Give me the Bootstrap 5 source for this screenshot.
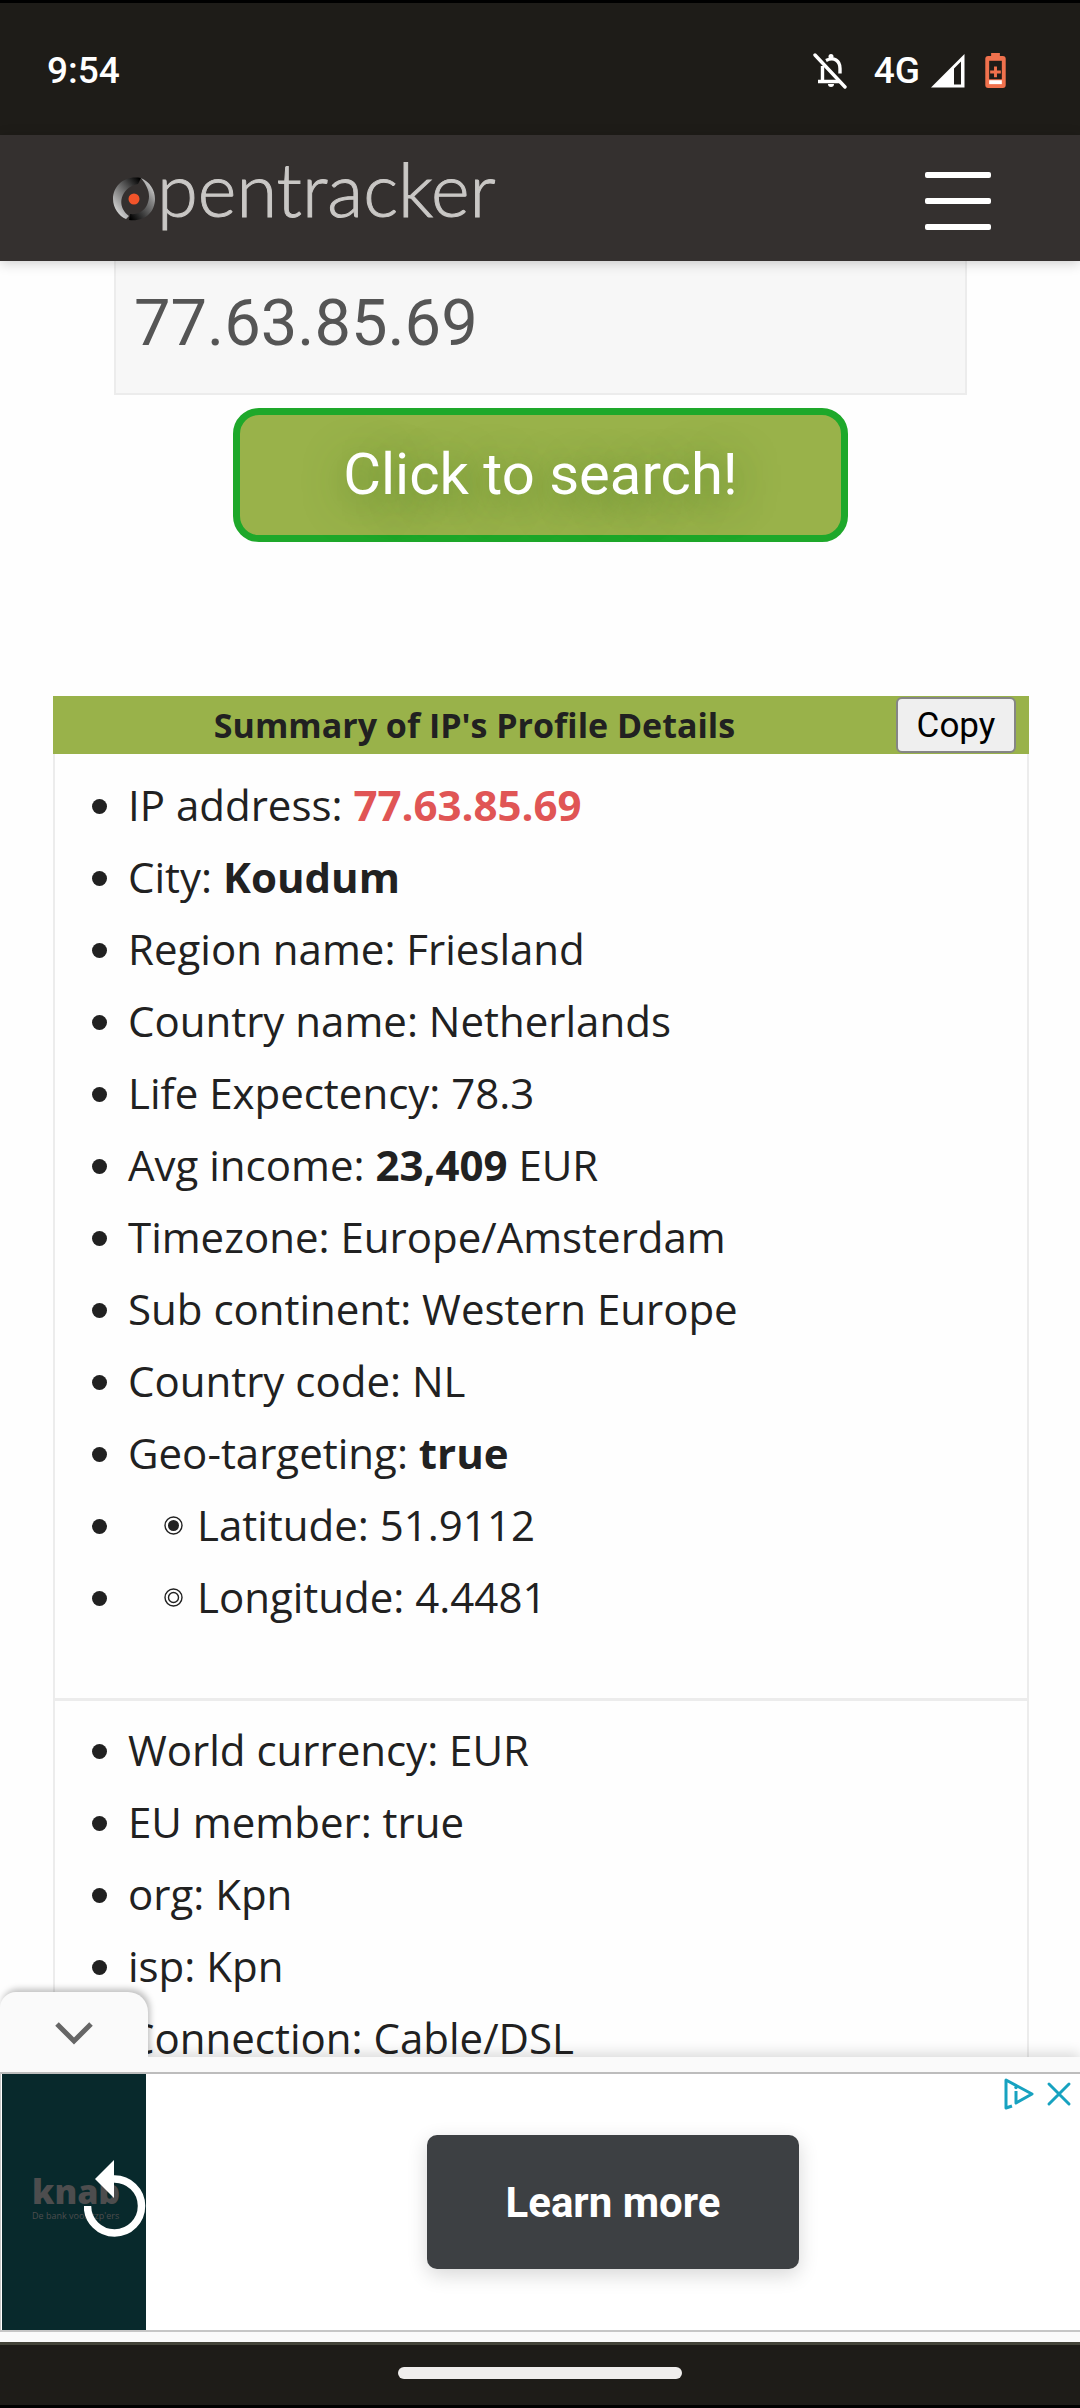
<!DOCTYPE html>
<html lang="en">
<head>
<meta charset="utf-8">
<meta name="viewport" content="width=device-width, initial-scale=1">
<title>Opentracker IP lookup</title>
<link rel="stylesheet" href="https://cdn.jsdelivr.net/npm/bootstrap@5.3.0/dist/css/bootstrap.min.css">
<script src="https://cdn.jsdelivr.net/npm/bootstrap@5.3.0/dist/js/bootstrap.bundle.min.js"></script>
<style>
  body { font-family: "Open Sans", "Noto Sans", sans-serif; color: #212121; background: #fefefe; }
  svg { display: block; flex: none; }

  .status-bar { height: 135px; padding: 0 74px 0 47px; background: #1e1c18; border-top: 3px solid #000; color: #fff;
    font-family: Roboto, sans-serif; font-weight: 500; font-size: 37px; }
  .status-inner { height: 132px; padding-top: 4px; }
  .sig-group { gap: 11px; margin-right: 20px; }
  .bell-icon { margin-right: 27px; }

  .site-nav { height: 126px; padding: 0 88px 0 113px; background: #34302f; box-shadow: 0 2px 12px rgba(0,0,0,.2); z-index: 2; }
  .brand-link { color: #c9c7c5; font-family: Lato, sans-serif; font-weight: 300; font-size: 74px; line-height: 96px; gap: 2px; padding-bottom: 18px;
    -webkit-text-stroke: 1px #c9c7c5; }
  .brand-eye { margin-top: 20px; }
  .menu-btn { width: 68px; height: 60px; gap: 20px; margin-top: 6px; }
  .menu-btn span { width: 66px; height: 6px; flex: none; border-radius: 2px; background: #fff; }

  .lookup-form { padding: 0 113px 0 114px; }
  .ip-field { height: 134px; padding: 0 18px 8px; border: 2px solid #ececec; border-top: 0; border-radius: 0; background: #f7f7f7 !important;
    color: #555 !important; font-family: Roboto, sans-serif; font-size: 65px; }
  .search-btn { width: 72%; height: 134px; margin: 13px auto 154px; padding: 0 0 2px; border: 7px solid #1ea82a !important; border-radius: 26px;
    background: #99b24a !important; color: #fff !important; font-family: Roboto, sans-serif; font-size: 58px; text-shadow: 0 8px 40px rgba(60,110,30,.8); }

  .profile-box { margin: 0 51px 0 53px; border: 2px solid #ececec; border-top: 0; }
  .profile-head { height: 58px; margin: 0 -2px; padding-right: 13px; background: #99b24a; }
  .profile-title { font-size: 34px; font-weight: 700; line-height: 56px; }
  .copy-btn { width: 120px; height: 56px; border: 2px solid #858585; border-radius: 6px; background: #efefef; color: #000;
    font-family: Roboto, sans-serif; font-size: 35px; line-height: 54px; }
  .facts { padding: 15px 0 65px 73px; font-size: 42px; line-height: 72px; }
  .facts + .facts { padding-top: 13px; border-top: 3px solid #ececec; }
  .facts li { position: relative; white-space: nowrap; }
  .facts li::before { content: ""; position: absolute; left: -36px; top: 30px; width: 15px; height: 15px; border-radius: 50%; background: #212121; }
  .facts .coord { padding-left: 36px; gap: 14px; }
  .ip-red { color: #e05555; }

  .ad-panel { z-index: 3; background: #fafafa; box-shadow: 0 -4px 12px rgba(0,0,0,.14); padding: 15px 0 10px; }
  .ad-toggle { position: absolute; left: 0; bottom: 100%; width: 148px; height: 65px; border: 0; border-radius: 16px 20px 0 0; background: #fafafa;
    box-shadow: 2px -3px 6px rgba(0,0,0,.25); clip-path: inset(-12px -14px 0 0); }
  .toggle-arrow { margin-top: 16px; }
  .ad-box { height: 260px; padding-left: 1px; border-top: 2px solid #bdbdbd; border-bottom: 2px solid #c6c6c6; border-left: 1px solid #c6c6c6; background: #fff; }
  .ad-thumb { width: 144px; padding: 0 0 10px 30px; background: #08292c; color: #4d4d4e; }
  .knab-name { font-size: 34px; font-weight: 800; line-height: 38px; }
  .knab-line { font-size: 9px; white-space: nowrap; line-height: 12px; }
  .replay { position: absolute; left: 83px; top: 86px; }
  .learn-btn { width: 372px; height: 134px; margin-left: 281px; border: 0; border-radius: 10px; background: #3d4043 !important; color: #fff !important;
    font-family: Roboto, sans-serif; font-weight: 700; font-size: 42px; box-shadow: 0 6px 20px rgba(0,0,0,.16); }
  .ad-marks { position: absolute; right: 8px; top: 4px; gap: 12px; }

  .gesture-bar { height: 66px; padding-top: 22px; background: #1e1c18; border-top: 3px solid #45453a; border-bottom: 3px solid #000; }
  .gesture-pill { width: 284px; height: 12px; border-radius: 6px; background: #efedec; }
</style>
</head>
<body>
<div class="d-flex flex-column vh-100 overflow-hidden">

  <header class="status-bar flex-shrink-0">
    <div class="status-inner d-flex align-items-center justify-content-between">
      <span>9:54</span>
      <div class="d-flex align-items-center">
        <svg class="bell-icon" width="34" height="36" viewBox="0 0 34 36" fill="none" stroke="#fff" stroke-width="3.4" aria-label="Notifications off">
          <path d="M2 2 32 34" stroke-linecap="round"/>
          <path d="M9.500 13v15M5 28.500h22M13 7.500c8-4 14 0 14 8v5"/>
          <circle cx="18" cy="3.500" r="2.500" fill="#fff" stroke="none"/>
          <path d="M15 31h6a3 3 0 0 1-6 0Z" fill="#fff" stroke="none"/>
        </svg>
        <div class="sig-group d-flex align-items-center">
          <span>4G</span>
          <svg width="34" height="34" viewBox="0 0 34 34" aria-label="Signal"><path d="M0 33.500 33.500 0V33.500ZM23 14.500V30.500h7V7.500Z" fill="#fff" fill-rule="evenodd"/></svg>
        </div>
        <svg width="21" height="36" viewBox="0 0 21 37" aria-label="Battery saver">
          <path d="M6 0h9v3h3q3 0 3 3v27q0 3-3 3H3q-3 0-3-3V6q0-3 3-3h3Z" fill="#f0714d"/>
          <path d="M4 8h13v19H4Z" fill="#1e1c18"/><path d="M4 28h13v4H4Z" fill="#fff"/>
          <path d="M10.500 14v11M5 19.500h11" stroke="#f0714d" stroke-width="3"/>
        </svg>
      </div>
    </div>
  </header>

  <nav class="site-nav flex-shrink-0 d-flex align-items-center justify-content-between position-relative" aria-label="Main">
    <a class="brand-link d-flex align-items-center text-decoration-none" href="#" aria-label="opentracker">
      <svg class="brand-eye" width="42" height="44" viewBox="0 0 42 44">
        <defs>
          <linearGradient id="eyeL" x1=".1" y1="1" x2=".9" y2="0"><stop offset="0" stop-color="#eee"/><stop offset=".35" stop-color="#9a9a9a"/><stop offset=".7" stop-color="#4a4a4a"/><stop offset="1" stop-color="#000"/></linearGradient>
          <linearGradient id="eyeR" x1=".9" y1="0" x2=".1" y2="1"><stop offset="0" stop-color="#eee"/><stop offset=".35" stop-color="#858585"/><stop offset=".7" stop-color="#3c3c3c"/><stop offset="1" stop-color="#000"/></linearGradient>
        </defs>
        <path d="M28 1C11-2 0 9 0 22c0 9 6 17 13 20l3-3C8 33 6 24 11 16c4-6 9-8 14-9Z" fill="url(#eyeL)"/>
        <path d="M28 1c9 4 14 12 14 21 0 13-10 23-26 21l1-6c8 1 14-3 17-9 4-9 2-17-6-27Z" fill="url(#eyeR)"/>
        <circle cx="21" cy="22" r="5.500" fill="#f2542a"/>
      </svg>
      <span>pentracker</span>
    </a>
    <button class="menu-btn btn p-0 border-0 d-flex flex-column align-items-center justify-content-center" type="button" aria-label="Open menu"><span></span><span></span><span></span></button>
  </nav>

  <main class="flex-fill overflow-hidden" style="min-height:0">
    <form class="lookup-form d-flex flex-column">
      <input class="ip-field form-control" type="text" value="77.63.85.69" aria-label="IP address">
      <button class="search-btn btn" type="button">Click to search!</button>
    </form>

    <section class="profile-box">
      <div class="profile-head d-flex align-items-center">
        <h1 class="profile-title flex-fill text-center mb-0">Summary of IP's Profile Details</h1>
        <button class="copy-btn p-0" type="button">Copy</button>
      </div>
      <ul class="facts list-unstyled mb-0">
        <li>IP address: <b class="ip-red">77.63.85.69</b></li>
        <li>City: <b>Koudum</b></li>
        <li>Region name: Friesland</li>
        <li>Country name: Netherlands</li>
        <li>Life Expectency: 78.3</li>
        <li>Avg income: <b>23,409</b> EUR</li>
        <li>Timezone: Europe/Amsterdam</li>
        <li>Sub continent: Western Europe</li>
        <li>Country code: NL</li>
        <li>Geo-targeting: <b>true</b></li>
        <li class="coord d-flex align-items-center"><svg width="19" height="19" viewBox="0 0 19 19"><circle cx="9.500" cy="9.500" r="8.500" fill="none" stroke="#212121" stroke-width="1.400"/><circle cx="9.500" cy="9.500" r="5.500" fill="#212121"/></svg>Latitude: 51.9112</li>
        <li class="coord d-flex align-items-center"><svg width="19" height="19" viewBox="0 0 19 19" fill="none" stroke="#212121" stroke-width="1.400"><circle cx="9.500" cy="9.500" r="8.500"/><circle cx="9.500" cy="9.500" r="5"/></svg>Longitude: 4.4481</li>
      </ul>
      <ul class="facts list-unstyled mb-0">
        <li>World currency: EUR</li>
        <li>EU member: true</li>
        <li>org: Kpn</li>
        <li>isp: Kpn</li>
        <li>Connection: Cable/DSL</li>
      </ul>
    </section>
  </main>

  <aside class="ad-panel flex-shrink-0 position-relative" aria-label="Advertisement">
    <button class="ad-toggle d-flex align-items-center justify-content-center p-0" type="button" aria-label="Collapse">
      <svg class="toggle-arrow" width="40" height="24" viewBox="0 0 40 24" fill="none" stroke="#666" stroke-width="5"><path d="M3 3 20 20 37 3"/></svg>
    </button>
    <div class="ad-box d-flex align-items-center position-relative">
      <div class="ad-thumb h-100 d-flex flex-column justify-content-center">
        <span class="knab-name">knab</span>
        <span class="knab-line">De bank voor zzp'ers</span>
      </div>
      <svg class="replay" width="64" height="78" viewBox="0 0 64 78" aria-label="Replay"><path d="M3.500 46A27 27 0 1 0 30 19" fill="none" stroke="#fff" stroke-width="7.500"/><path d="M11 19 30 0V38Z" fill="#fff"/></svg>
      <button class="learn-btn btn" type="button">Learn more</button>
      <div class="ad-marks d-flex align-items-center">
        <svg width="30" height="32" viewBox="0 0 30 32" fill="none" stroke="#17a2c0" stroke-width="3" stroke-linejoin="round" aria-label="AdChoices"><path d="M8 28 2 30V2L28 16 12 25V13"/><circle cx="12" cy="9.500" r="1.700" fill="#17a2c0" stroke="none"/></svg>
        <svg width="26" height="26" viewBox="0 0 26 26" stroke="#17a2c0" stroke-width="3" stroke-linecap="round" aria-label="Close ad"><path d="M3 3 23 23M23 3 3 23"/></svg>
      </div>
    </div>
  </aside>

  <footer class="gesture-bar flex-shrink-0"><div class="gesture-pill mx-auto"></div></footer>
</div>
</body>
</html>
